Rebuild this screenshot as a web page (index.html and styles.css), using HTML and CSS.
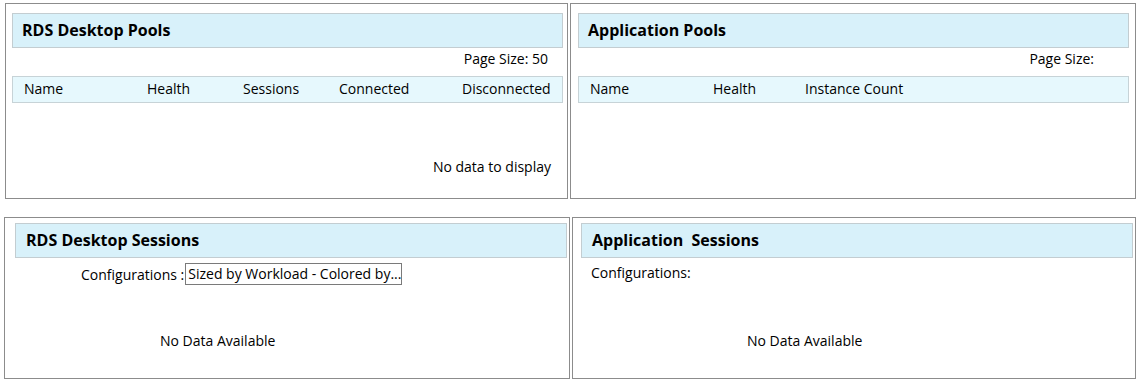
FILE: index.html
```html
<!DOCTYPE html>
<html>
<head>
<meta charset="utf-8">
<link rel="stylesheet" href="styles.css">
</head>
<body>
<div class="page">
  <div class="row row-top">
    <section class="panel p1">
      <div class="head">RDS Desktop Pools</div>
      <div class="pagesize">Page Size: 50</div>
      <div class="thead cols5">
        <span>Name</span><span>Health</span><span>Sessions</span><span>Connected</span><span>Disconnected</span>
      </div>
      <div class="nodata">No data to display</div>
    </section>
    <section class="panel p2">
      <div class="head">Application Pools</div>
      <div class="pagesize ps2">Page Size:</div>
      <div class="thead cols3">
        <span>Name</span><span>Health</span><span>Instance Count</span>
      </div>
    </section>
  </div>
  <div class="row row-bottom">
    <section class="panel p3">
      <div class="head">RDS Desktop Sessions</div>
      <div class="config">
        <span class="config-label">Configurations :</span>
        <span class="select">Sized by Workload - Colored by...</span>
      </div>
      <div class="nodata-center n3">No Data Available</div>
    </section>
    <section class="panel p4">
      <div class="head">Application&nbsp; Sessions</div>
      <div class="config2">Configurations:</div>
      <div class="nodata-center n4">No Data Available</div>
    </section>
  </div>
</div>
</body>
</html>
```

FILE: styles.css
```css
* { box-sizing: border-box; }
html, body { margin: 0; padding: 0; background: #fff; }
body {
  font-family: "Open Sans", "Noto Sans", sans-serif;
  font-size: 14px;
  color: #000;
  width: 1143px;
  height: 385px;
  overflow: hidden;
}
.page { padding: 3px 0 0 5px; }
.row { display: flex; }
.row-top { gap: 2px; }
.row-bottom { gap: 2px; margin-top: 18px; margin-left: -1px; }

.panel {
  border: 1px solid #8c8c8c;
  background: #fff;
}
.p1 { width: 563px; height: 196px; padding: 9px 4px 0 6px; }
.p2 { width: 566px; height: 196px; padding: 9px 6px 0 7px; }
.p3 { width: 566px; height: 162px; padding: 5px 2px 0 10px; }
.p4 { width: 564px; height: 162px; padding: 5px 2px 0 8px; }

.head {
  height: 35px;
  line-height: 32px;
  background: #d8f1fa;
  border: 1px solid #c3cdd1;
  font-weight: bold;
  font-size: 16px;
  padding-left: 9px;
}
.p3 .head, .p4 .head { padding-left: 10px; line-height: 33px; }

.pagesize {
  height: 28px;
  line-height: 22px;
  text-align: right;
  padding-right: 15px;
}
.ps2 { padding-right: 35px; }
.thead {
  height: 27px;
  line-height: 24px;
  background: #e6f8fd;
  border: 1px solid #c7d3d7;
  padding-left: 11px;
  display: grid;
}
.cols5 { grid-template-columns: 123px 96px 96px 123px 1fr; }
.cols3 { grid-template-columns: 123px 92px 1fr; }

.nodata {
  text-align: right;
  padding-right: 12px;
  margin-top: 54px;
}

.config {
  display: flex;
  align-items: center;
  margin-top: 5px;
  padding-left: 66px;
  height: 22px;
}
.config-label { margin-right: 1px; white-space: nowrap; }
.select {
  display: inline-block;
  width: 217px;
  height: 22px;
  line-height: 20px;
  border: 1px solid #7a7a7a;
  padding-left: 2px;
  white-space: nowrap;
  overflow: hidden;
}
.config2 {
  margin-top: 5px;
  padding-left: 10px;
  height: 20px;
  line-height: 20px;
}
.nodata-center { line-height: 20px; }
.n3 { margin-top: 46px; padding-left: 145px; }
.n4 { margin-top: 48px; padding-left: 166px; }
```
